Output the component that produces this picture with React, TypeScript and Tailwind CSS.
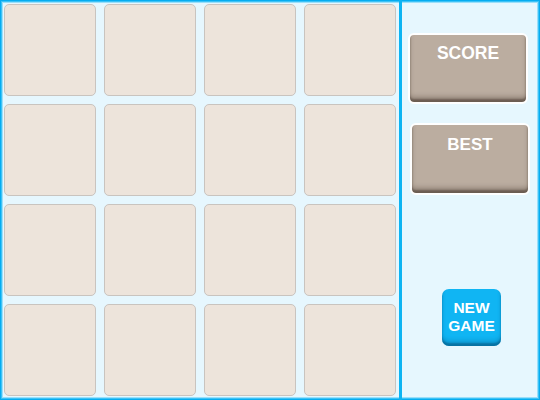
const cells = Array.from({ length: 16 }, (_, i) => i);

export default function App() {
  return (
    <div className="w-[540px] h-[400px] flex bg-[#e6f7fe] shadow-[inset_0_0_0_1px_#05acf0,inset_0_0_0_2px_#3cc2f6,inset_0_0_0_3px_#9adffa] font-['Liberation_Sans',Arial,sans-serif]">
      <div className="w-[399px] shrink-0 grid grid-cols-4 gap-2 pl-1 pt-1 pb-1 pr-[3px]">
        {cells.map((c) => (
          <div key={c} className="rounded-[5px] border border-[#c9c4bf] bg-[#ede4db]" />
        ))}
      </div>
      <div className="w-[3px] shrink-0 bg-[#0db4f2]" />
      <div className="flex-1 flex flex-col items-center pr-[3px] pt-[33px]">
        <div className="w-[120px] h-[71px] ml-[-3px] rounded-[6px] border-2 border-white bg-[#bbada0] shadow-[inset_0_-3px_2px_rgba(60,45,35,0.5),inset_0_-6px_4px_rgba(60,45,35,0.25)] text-white font-bold text-[17.5px] text-center pt-[7px] leading-[22px]">
          SCORE
        </div>
        <div className="w-[120px] h-[72px] ml-[1px] mt-[19px] rounded-[6px] border-2 border-white bg-[#bbada0] shadow-[inset_0_-3px_2px_rgba(60,45,35,0.5),inset_0_-6px_4px_rgba(60,45,35,0.25)] text-white font-bold text-[17px] text-center pt-[9px] leading-[22px]">
          BEST
        </div>
        <div className="w-[59px] h-[57px] ml-[4px] mt-[94px] rounded-[7px] bg-[#10b5f3] shadow-[inset_0_-3px_2px_rgba(0,70,110,0.5),inset_0_-6px_4px_rgba(0,70,110,0.2)] text-white font-bold text-[15.5px] leading-[18px] text-center flex flex-col justify-center pb-[2px]">
          <span>NEW</span>
          <span>GAME</span>
        </div>
      </div>
    </div>
  );
}
